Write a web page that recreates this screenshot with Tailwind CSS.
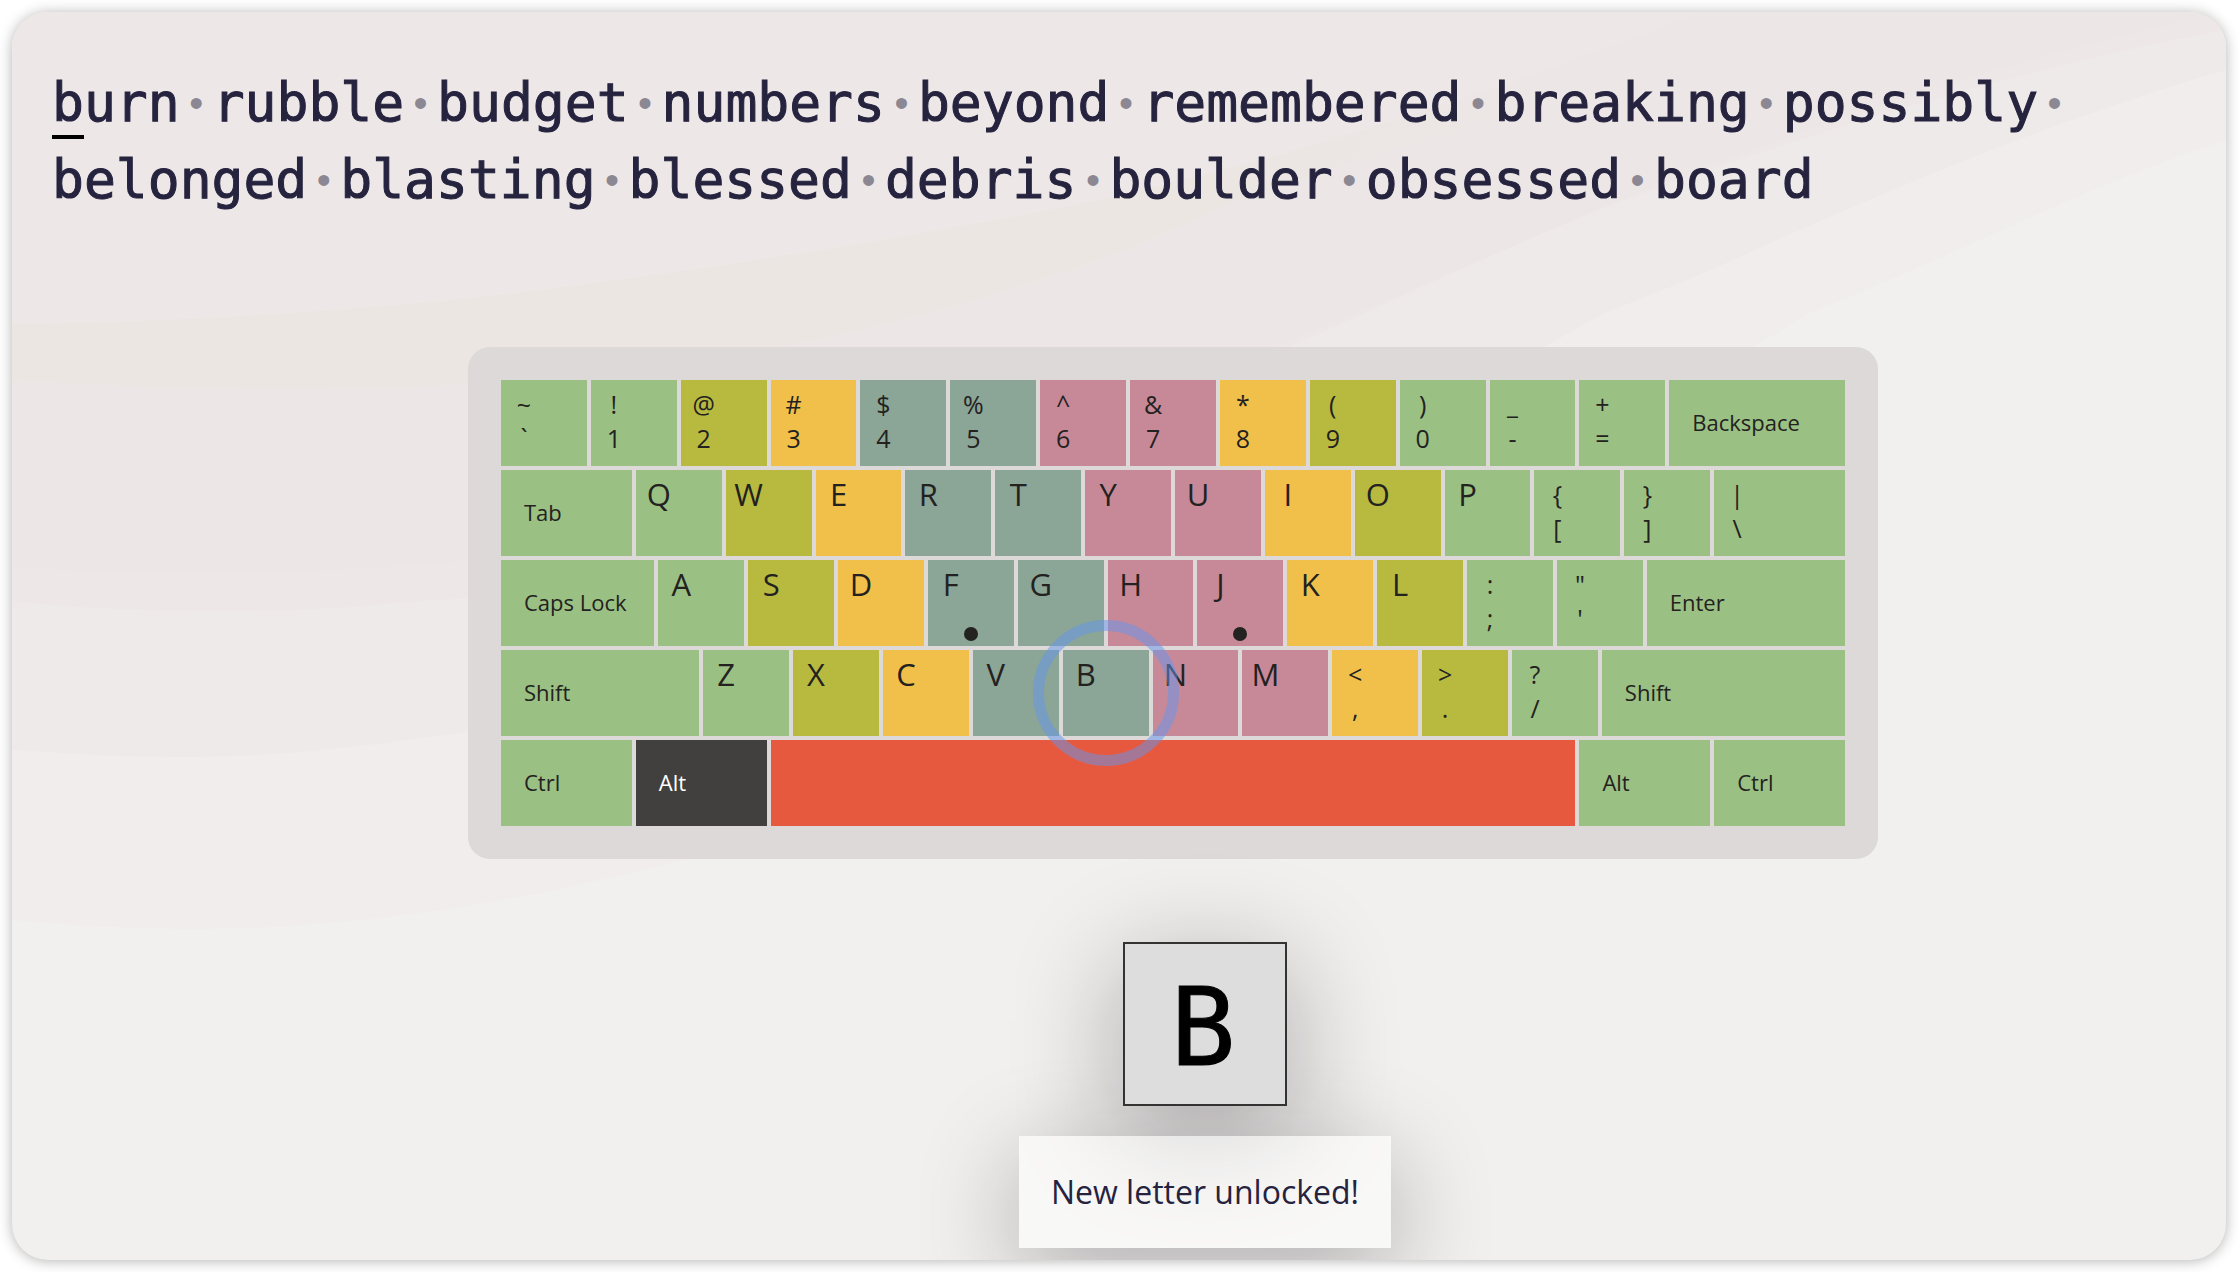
<!DOCTYPE html>
<html lang="en">
<head>
<meta charset="utf-8">
<meta name="viewport" content="width=device-width, initial-scale=1">
<title>Typing lesson</title>
<script src="https://cdn.jsdelivr.net/npm/@tailwindcss/browser@4"></script>
</head>
<body class="flex min-h-screen bg-white p-3 font-['Open_Sans','Noto_Sans',sans-serif]">
<main class="relative isolate flex flex-1 flex-col overflow-hidden rounded-[36px] bg-[#f1f0ee] pb-3 shadow-[0_1px_14px_rgba(0,0,0,0.3)]">

  <!-- Soft layered waves behind the lesson -->
  <svg class="absolute inset-0 -z-10 h-full w-full" viewBox="12 12 2214 1248" preserveAspectRatio="none" aria-hidden="true">
    <defs>
      <linearGradient id="sand" gradientUnits="userSpaceOnUse" x1="1200" y1="0" x2="1550" y2="0">
        <stop offset="0" stop-color="#ebe6e2"/>
        <stop offset="1" stop-color="#ece7e6"/>
      </linearGradient>
    </defs>
    <path fill="#f1edec" d="M12 12H2226V140C2130 172 2050 208 1960 249C1900 276 1860 293 1810 313C1400 560 1000 780 688 859C520 903 350 930 185 929C120 928 60 925 12 920Z"/>
    <path fill="#eeeae9" d="M12 12H2226V70C2060 118 1900 185 1757 249C1705 274 1660 291 1605 313C1200 540 800 690 435 736C340 750 260 757 180 757C120 757 60 754 12 749Z"/>
    <path fill="#ede8e7" d="M12 12H2226V30C2000 70 1700 165 1500 250C1150 420 700 590 420 601C280 616 120 613 12 601Z"/>
    <path fill="#ece7e6" d="M12 12H2226C2000 60 1800 130 1620 200C1250 360 850 540 470 560C300 578 120 575 12 567Z"/>
    <path fill="url(#sand)" d="M12 12H2000C1750 50 1430 130 1240 200L1125 250C900 335 650 380 450 385C300 392 140 388 12 380Z"/>
    <path fill="#ede8e7" d="M12 12H1700C1500 90 1300 155 1100 200C920 236 700 271 500 295C350 311 180 322 12 324Z"/>
  </svg>

  <p id="words" class="flex flex-wrap pt-[52px] pr-6 pl-10 font-['DejaVu_Sans_Mono',monospace] text-[53px] leading-[77px] text-[#26233f] [-webkit-text-stroke:1px_#26233f]"></p>

  <div class="mt-[129px] flex justify-center pl-[108px]">
    <div id="keyboard" class="grid w-full max-w-[1410px] grid-cols-[repeat(60,minmax(0,1fr))] gap-1 rounded-[22px] bg-[#dcd9d8] p-[33px] text-[#232220]" role="group" aria-label="Keyboard"></div>
  </div>

  <div class="mt-[83px] flex flex-col items-center gap-[30px] pl-[172px]">
    <div class="size-[164px] shadow-[0_25px_110px_rgba(20,10,20,0.32)]">
      <div class="relative z-10 flex size-full items-center justify-center border-2 border-[#333] bg-[#ddd] pt-2 pr-1 font-['DejaVu_Sans_Mono',monospace] text-[108px] leading-none text-black [-webkit-text-stroke:1px_#000]">B</div>
    </div>
    <div class="bg-white/50 px-8 py-8 text-[32px] leading-[48px] text-[#26233f] shadow-[0_25px_100px_rgba(20,10,20,0.3)]" role="status">New letter unlocked!</div>
  </div>
</main>

<script>
  const words = "burn rubble budget numbers beyond remembered breaking possibly belonged blasting blessed debris boulder obsessed board".split(" ");
  document.getElementById("words").innerHTML = words.map((word, i) => {
    const text = i === 0
      ? `<span class="relative">${word[0]}<span class="absolute inset-x-0 top-[63px] h-1 bg-black"></span></span>${word.slice(1)}`
      : word;
    const dot = i < words.length - 1
      ? `<span class="inline-block w-[33px] text-center align-top font-['Liberation_Sans',sans-serif] text-[40px] leading-[79px] h-[77px] text-[#8b8894] [-webkit-text-stroke:0]">•</span>`
      : "";
    return `<span class="whitespace-nowrap">${text}${dot}</span>`;
  }).join("");

  const colors = {
    g: "bg-[#9bc083]", o: "bg-[#b8ba40]", y: "bg-[#f1c04a]", t: "bg-[#8ba597]",
    p: "bg-[#c78998]", d: "bg-[#42403e] text-white", r: "bg-[#e7593f]"
  };
  const spans = {
    4: "col-span-4", 6: "col-span-6", 7: "col-span-7", 8: "col-span-8",
    9: "col-span-9", 11: "col-span-11", 36: "col-span-36"
  };
  // Each key: legend, finger colour, width in quarter units
  const keys = [
    ["~`","g"],["!1","g"],["@2","o"],["#3","y"],["$4","t"],["%5","t"],["^6","p"],["&7","p"],["*8","y"],["(9","o"],[")0","g"],["_-","g"],["+=","g"],["Backspace","g",8],
    ["Tab","g",6],["Q","g"],["W","o"],["E","y"],["R","t"],["T","t"],["Y","p"],["U","p"],["I","y"],["O","o"],["P","g"],["{[","g"],["}]","g"],["|\\","g",6],
    ["Caps Lock","g",7],["A","g"],["S","o"],["D","y"],["F","t"],["G","t"],["H","p"],["J","p"],["K","y"],["L","o"],[":;","g"],["\"'","g"],["Enter","g",9],
    ["Shift","g",9],["Z","g"],["X","o"],["C","y"],["V","t"],["B","t"],["N","p"],["M","p"],["<,","y"],[">.","o"],["?/","g"],["Shift","g",11],
    ["Ctrl","g",6],["Alt","d",6],["","r",36],["Alt","g",6],["Ctrl","g",6]
  ];
  const keyboard = document.getElementById("keyboard");
  for (const [legend, color, width = 4] of keys) {
    const key = document.createElement("button");
    key.type = "button";
    key.className = `relative flex h-[86px] ${colors[color]} ${spans[width]}`;
    if (legend === "") key.setAttribute("aria-label", "Space");
    if (legend.length > 2) {
      key.className += " items-center pb-0.5 pl-[23px] text-[22px]";
      key.textContent = legend;
    } else {
      const label = document.createElement("span");
      label.className = legend.length === 2
        ? "flex w-[46px] flex-col pt-[7px] text-center text-[25px] leading-[34px]"
        : "w-[46px] text-center text-[31px] leading-[48px]";
      for (const ch of legend) {
        const line = document.createElement("span");
        line.textContent = ch;
        label.append(line);
      }
      key.append(label);
    }
    if (legend === "F" || legend === "J") {
      key.insertAdjacentHTML("beforeend", '<span class="absolute bottom-[5px] left-1/2 size-[14px] -translate-x-1/2 rounded-full bg-[#232220]"></span>');
    }
    if (legend === "B") {
      key.insertAdjacentHTML("beforeend", '<span class="absolute -inset-[30px] z-10 rounded-full border-[11px] border-[#6495ed]/50"></span>');
    }
    keyboard.append(key);
  }
</script>
</body>
</html>
